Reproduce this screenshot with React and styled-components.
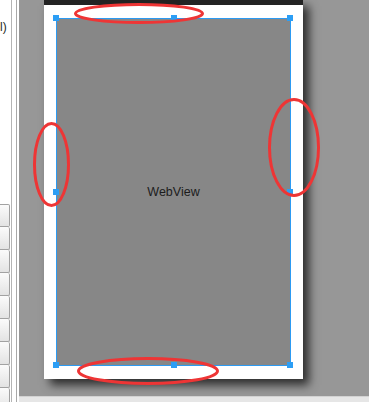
import React from "react";
import styled, { createGlobalStyle } from "styled-components";

const GlobalStyle = createGlobalStyle`
  html, body { margin: 0; padding: 0; }
  body { font-family: "Liberation Sans", Arial, sans-serif; background: #fff; }
`;

const Page = styled.div`
  position: relative;
  display: flex;
  width: 369px;
  height: 402px;
  overflow: hidden;
  background: #fff;
`;

const SidePanel = styled.div`
  box-sizing: border-box;
  width: 12px;
  border-right: 1px solid #b4b4b4;
  display: flex;
  flex-direction: column;
  overflow: hidden;
  background: #fff;
`;

const Label = styled.div`
  height: 20px;
  margin-top: 19px;
  font-size: 12px;
  line-height: 16px;
  color: #1e2a1e;
  white-space: nowrap;
`;

const ButtonStack = styled.div`
  display: flex;
  flex-direction: column;
  margin-top: 169px;
`;

const PaletteButton = styled.div`
  box-sizing: border-box;
  flex: none;
  width: 10px;
  height: 23px;
  border: 1px solid #a2a2a2;
  border-left: none;
  border-top: ${(p) => (p.$first ? "1px solid #a2a2a2" : "none")};
  border-radius: 0 2px 2px 0;
  background: linear-gradient(#fbfbfb, #e3e3e3);
`;

const Gutter = styled.div`
  box-sizing: border-box;
  width: 5px;
  border-right: 1px solid #a8a8a8;
  margin-right: 2px;
  background: #fff;
`;

const CanvasColumn = styled.div`
  flex: 1;
  display: flex;
  flex-direction: column;
`;

const Canvas = styled.div`
  flex: 1;
  background: #979797;
  padding-left: 25px;
  overflow: hidden;
`;

const BottomStrip = styled.div`
  height: 5px;
  background: #e6e6e6;
  border-top: 1px solid #d2d2d2;
`;

const DeviceFrame = styled.div`
  box-sizing: border-box;
  width: 259px;
  height: 379px;
  background: #fff;
  border-top: 5px solid #232323;
  padding: 13px 12px;
  box-shadow: 6px 6px 9px rgba(0, 0, 0, 0.7);
`;

const Selection = styled.div`
  position: relative;
  box-sizing: border-box;
  width: 235px;
  height: 348px;
  border: 1px solid #2c9af2;
  background: #878787;
  display: flex;
  align-items: center;
  justify-content: center;
`;

const ViewName = styled.span`
  font-size: 12.5px;
  color: #1c1c1c;
`;

const Handle = styled.div`
  position: absolute;
  width: 6px;
  height: 6px;
  background: #2c9ef5;
  left: ${(p) => p.$x};
  top: ${(p) => p.$y};
`;

const Annotations = styled.svg`
  position: absolute;
  left: 0;
  top: 0;
  width: 369px;
  height: 402px;
  pointer-events: none;
`;

const xs = ["-4px", "calc(50% - 3px)", "calc(100% - 3px)"];
const handles = [];
xs.forEach((x, i) =>
  xs.forEach((y, j) => {
    if (!(i === 1 && j === 1)) handles.push({ x, y });
  })
);

const ellipses = [
  { cx: 139, cy: 13.5, rx: 63.5, ry: 9 },
  { cx: 51.5, cy: 164.5, rx: 17, ry: 41 },
  { cx: 294, cy: 147.5, rx: 24.5, ry: 48 },
  { cx: 148, cy: 371, rx: 69.5, ry: 12.5 },
];

export default function App() {
  return (
    <>
      <GlobalStyle />
      <Page>
        <SidePanel>
          <Label>l)</Label>
          <ButtonStack>
            {Array.from({ length: 9 }).map((_, i) => (
              <PaletteButton key={i} $first={i === 0} />
            ))}
          </ButtonStack>
        </SidePanel>
        <Gutter />
        <CanvasColumn>
          <Canvas>
            <DeviceFrame>
              <Selection>
                <ViewName>WebView</ViewName>
                {handles.map((h, i) => (
                  <Handle key={i} $x={h.x} $y={h.y} />
                ))}
              </Selection>
            </DeviceFrame>
          </Canvas>
          <BottomStrip />
        </CanvasColumn>
        <Annotations viewBox="0 0 369 402">
          {ellipses.map((e, i) => (
            <ellipse
              key={i}
              cx={e.cx}
              cy={e.cy}
              rx={e.rx}
              ry={e.ry}
              fill="none"
              stroke="#ee3535"
              strokeWidth="3"
            />
          ))}
        </Annotations>
      </Page>
    </>
  );
}
